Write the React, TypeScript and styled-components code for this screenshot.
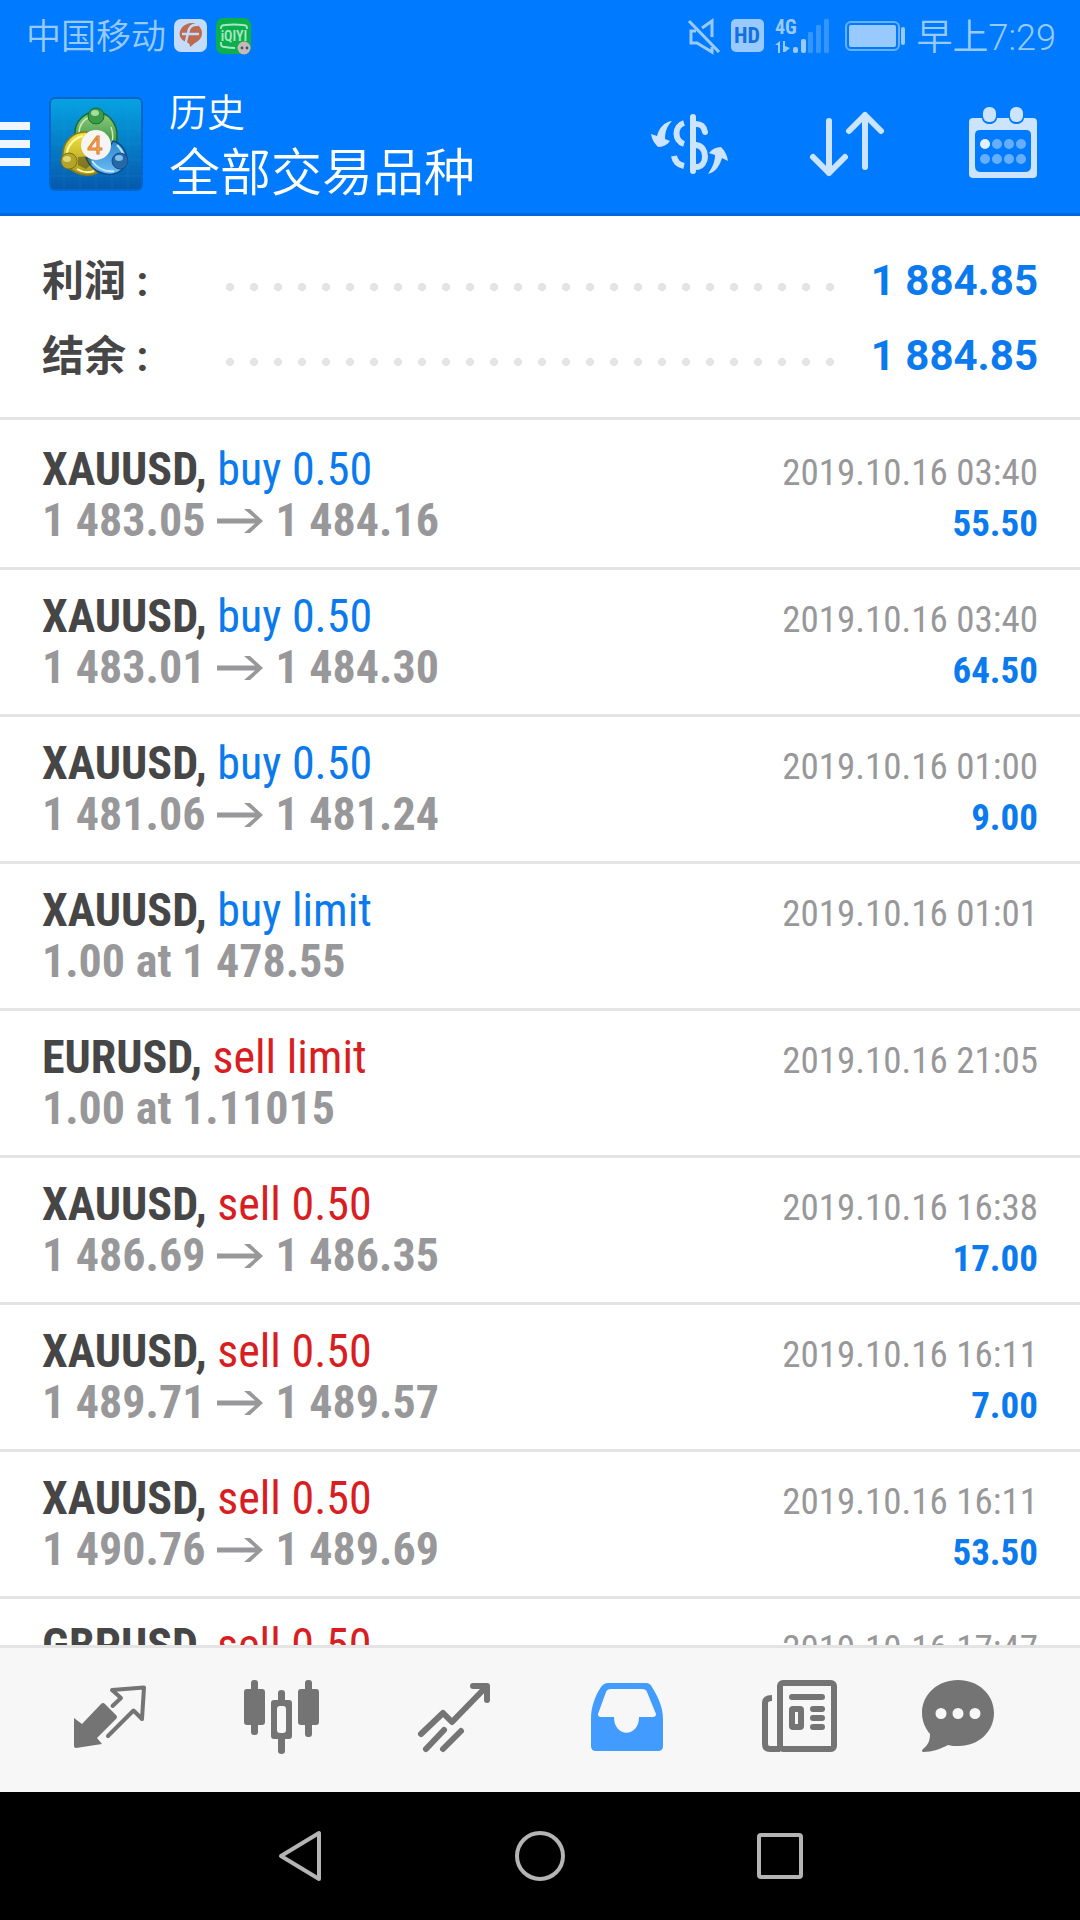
import React from 'react';
import styled, { createGlobalStyle } from 'styled-components';

const condensed = `'Roboto Condensed', Roboto, 'Noto Sans CJK SC', sans-serif`;
const regular = `Roboto, 'Noto Sans CJK SC', sans-serif`;

const GlobalStyle = createGlobalStyle`
  *, *::before, *::after { box-sizing: border-box; }
  html, body, #root { height: 100%; }
  body { margin: 0; background: #fff; font-family: ${regular}; }
  h1, p, ul, dl, dd, dt { margin: 0; padding: 0; font-weight: inherit; }
  svg { display: block; flex: none; overflow: visible; }
`;

const Screen = styled.div`
  display: flex;
  flex-direction: column;
  height: 100%;
  overflow: hidden;
`;

const Top = styled.header`
  flex: none;
  color: #fff;
  background: #007aff;
  border-bottom: 3px solid #006bdf;
`;

const StatusBar = styled.div`
  display: flex;
  align-items: center;
  height: 72px;
  padding: 0 24px 0 26px;
  color: #99caff;
`;

const StatusText = styled.span<{ $size: number }>`
  padding-top: 4px;
  font-size: ${(p) => p.$size}px;
  line-height: 48px;
  font-weight: 350;
`;

const StatusGroup = styled.div<{ $gap: number }>`
  display: flex;
  align-items: center;
  gap: ${(p) => p.$gap}px;
`;

const Spacer = styled.div`
  flex: 1;
`;

const Toolbar = styled.div`
  display: flex;
  align-items: center;
  height: 141px;
  padding: 2px 42px 0 0;
`;

const IconButton = styled.button`
  display: flex;
  padding: 0;
  border: 0;
  color: #cce4ff;
  background: none;
  cursor: pointer;
`;

const MenuButton = styled(IconButton)`
  align-items: center;
  gap: 19px;
`;

const Titles = styled.div`
  flex: 1;
  padding: 6px 0 0 26px;
  font-weight: 350;
`;

const Caption = styled.p`
  font-size: 38px;
  line-height: 54px;
`;

const Title = styled.h1`
  font-size: 51px;
  line-height: 68px;
`;

const Actions = styled.div`
  display: flex;
  align-items: center;
  gap: 84px;
`;

const Content = styled.main`
  flex: 1;
  min-height: 0;
  overflow: hidden;
`;

const Summary = styled.dl`
  padding: 24px 42px 27px;
  border-bottom: 3px solid #e4e4e4;
`;

const SummaryRow = styled.div`
  display: flex;
  align-items: center;
  height: 75px;
  padding-top: 6px;
  font-size: 42px;
  line-height: 60px;
`;

const SummaryLabel = styled.dt`
  width: 176px;
  padding-top: 3px;
  color: #464646;
  && { font-weight: 700; }
`;

const Leader = styled.span`
  flex: 1;
  height: 8px;
  margin-top: 12px;
  background: radial-gradient(circle at 12px 4px, #e4e4e4 4px, transparent 4px) 0 0 / 24px 8px repeat-x;
`;

const SummaryValue = styled.dd`
  width: 195px;
  color: #0a7aee;
  text-align: right;
  && { font-weight: 700; }
`;

const Deals = styled.ul`
  padding-top: 3px;
  list-style: none;
  font-family: ${condensed};
`;

const Deal = styled.li`
  display: grid;
  grid-template-columns: 1fr auto;
  align-content: start;
  height: 147px;
  padding: 21px 42px 0;
  border-bottom: 3px solid #e4e4e4;
  font-size: 46px;
  line-height: 51px;
  white-space: nowrap;
`;

const Symbol = styled.strong`
  color: #464646;
  font-weight: 700;
`;

const Side = styled.span<{ $sell: boolean }>`
  color: ${(p) => (p.$sell ? '#d81e22' : '#0a7aee')};
`;

const Prices = styled.div`
  display: flex;
  align-items: center;
  gap: 12px;
  color: #98989a;
  font-weight: 700;
`;

const Time = styled.time`
  height: 51px;
  color: #98989a;
  font-size: 37px;
  line-height: 57px;
  text-align: right;
`;

const Profit = styled.div`
  height: 51px;
  color: #0a7aee;
  font-size: 37px;
  line-height: 57px;
  font-weight: 700;
  text-align: right;
`;

const Tabs = styled.nav`
  flex: none;
  display: grid;
  grid-template-columns: repeat(5, 172fr) 142fr;
  align-items: center;
  justify-items: center;
  height: 147px;
  padding: 0 52px 6px 24px;
  border-top: 3px solid #e4e4e4;
  background: #f7f7f7;
`;

const TabButton = styled(IconButton)<{ $active?: boolean }>`
  color: ${(p) => (p.$active ? '#429bff' : '#747474')};
`;

const SystemBar = styled.nav`
  flex: none;
  display: grid;
  grid-template-columns: repeat(3, 1fr);
  align-items: center;
  justify-items: center;
  height: 128px;
  padding: 0 calc(100% / 6);
  background: #000;
`;

const SystemButton = styled(IconButton)`
  color: #b4b4b4;
`;

const LeafBadge = () => (
  <svg width="33" height="34" viewBox="0 0 33 34">
    <rect width="33" height="33" rx="7" fill="#c3dcfa" />
    <path d="M16 28c0-3-1-4-4-5-6-2-8-8-5-13 3-5 8-6 12-6 5 1 9 5 9 10 0 6-4 8-7 10-2 1-3 3-5 4z" fill="#bd6a50" />
    <path d="M24 6c-6-1-9 2-10 8l-3 13M8 15h17" fill="none" stroke="#c3dcfa" strokeWidth="2.4" />
  </svg>
);

const VideoBadge = () => (
  <svg width="37" height="38" viewBox="0 0 37 38">
    <rect x="1" y="1" width="35" height="36" rx="7" fill="#0bb04c" />
    <path d="M6 12v-1q0-3 4-3 9-1 18 0 4 0 4 3v1M6 25v2q0 3 4 3 5 1 10 1" fill="none" stroke="#a9e6c4" strokeWidth="1.8" />
    <text x="19" y="24" textAnchor="middle" fill="#a9e6c4" fontFamily="Roboto Condensed, Roboto, sans-serif" fontWeight="600" fontSize="14">iQIYI</text>
    <circle cx="29" cy="31" r="6.5" fill="#cdb7b4" />
    <circle cx="27" cy="31" r="1.4" fill="#245b8c" />
    <circle cx="32" cy="31" r="1.4" fill="#245b8c" />
  </svg>
);

const MuteIcon = () => (
  <svg width="34" height="36" viewBox="0 0 34 36" fill="none" stroke="currentColor" strokeWidth="3">
    <path d="M2 3l30 31" strokeWidth="3.2" />
    <path d="M15 10l10-7v16M9 13H4v12h6l15 9v-5" />
  </svg>
);

const HdIcon = () => (
  <svg width="34" height="36" viewBox="0 0 34 36">
    <rect y="1" width="33" height="33" rx="5" fill="#99caff" />
    <text x="16" y="25" textAnchor="middle" fill="#1170e4" fontFamily="Roboto Condensed, Roboto, sans-serif" fontWeight="700" fontSize="22">HD</text>
  </svg>
);

const SignalIcon = () => (
  <svg width="60" height="38" viewBox="0 0 60 38" fill="currentColor">
    <text x="0" y="17" fontFamily="Roboto Condensed, Roboto, sans-serif" fontWeight="700" fontSize="20">4G</text>
    <path d="M0 28l5-4v12H3v-8zM8 24h2l0 5 5 2-5 4-2 0z" />
    <rect x="18" y="30" width="5" height="6" rx="2" />
    <rect x="26" y="22" width="5" height="14" rx="2" />
    <g fill="#3395ff">
      <rect x="33" y="15" width="5" height="21" rx="1" />
      <rect x="41" y="8" width="5" height="28" rx="1" />
      <rect x="49" y="2" width="5" height="34" rx="1" />
    </g>
  </svg>
);

const BatteryIcon = () => (
  <svg width="62" height="30" viewBox="0 0 62 30">
    <rect x="1" y="1" width="53" height="28" rx="5" fill="none" stroke="#66b0ff" strokeWidth="2" />
    <rect x="4" y="4" width="47" height="22" rx="2" fill="#99caff" />
    <rect x="56" y="6" width="4" height="18" rx="2" fill="#99caff" />
  </svg>
);

const MenuIcon = () => (
  <svg width="30" height="44" viewBox="0 0 30 44" fill="#eff6ff">
    <path d="M0 0h30v8H0zM0 18h30v8H0zM0 36h30v8H0z" />
  </svg>
);

const LogoIcon = () => (
  <svg width="94" height="94" viewBox="0 0 94 94">
    <defs>
      <linearGradient id="tile" x1="0" y1="0" x2="0" y2="1">
        <stop offset="0" stopColor="#06a3e2" />
        <stop offset="1" stopColor="#0659ac" />
      </linearGradient>
      <linearGradient id="green" x1="0" y1="0" x2="0" y2="1">
        <stop offset="0" stopColor="#8fd082" />
        <stop offset="1" stopColor="#227a2b" />
      </linearGradient>
      <linearGradient id="gold" x1="0" y1="0" x2="0" y2="1">
        <stop offset="0" stopColor="#f5e23c" />
        <stop offset="1" stopColor="#a8991f" />
      </linearGradient>
      <linearGradient id="azure" x1="0" y1="0" x2="0" y2="1">
        <stop offset="0" stopColor="#2d86cf" />
        <stop offset="1" stopColor="#6cc0f6" />
      </linearGradient>
    </defs>
    <rect x="1" y="1" width="92" height="92" rx="5" fill="url(#tile)" stroke="#0565c9" strokeWidth="2" />
    <path d="M15 2v90M31 2v90M47 2v90M63 2v90M79 2v90M2 15h90M2 31h90M2 47h90M2 63h90M2 79h90" stroke="#2bb0ee" strokeOpacity=".15" />
    <path d="M26 38C25 24 36 15 47 15s22 10 21 26c0 8-3 14-7 18L50 40z" fill="url(#green)" stroke="#1a6b2c" strokeWidth="1.5" />
    <path d="M30 36c0-8 5-14 11-16M62 30c3 8 2 14 0 20" fill="none" stroke="#c9ecb9" strokeWidth="1.5" />
    <path d="M38 35c-14-1-25 10-24 25 3 14 20 22 34 16l-6-14z" fill="url(#gold)" stroke="#8a7a18" strokeWidth="1.5" />
    <path d="M34 39c-9 2-16 10-16 18M28 72c5 3 12 4 17 2" fill="none" stroke="#fffbb0" strokeWidth="2" />
    <path d="M64 44c8 2 14 10 14 20-3 11-14 16-25 12-7-2-13-8-16-15l18-2z" fill="url(#azure)" stroke="#0d4d8c" strokeWidth="1.5" />
    <path d="M43 64c5 7 13 11 22 10M68 48c4 4 7 9 7 14" fill="none" stroke="#c2e6ff" strokeWidth="2" />
    <path d="M29 60l12-1 2 8-6 5-8-4z" fill="#3a3a1c" fillOpacity=".45" />
    <circle cx="47" cy="19" r="8" fill="#3c9a48" stroke="#1a6b2c" />
    <ellipse cx="46" cy="16" rx="4" ry="3" fill="#a5dca0" />
    <circle cx="20" cy="64" r="8" fill="#b5a428" stroke="#7e7217" />
    <ellipse cx="18" cy="62" rx="4" ry="3" fill="#dfd775" />
    <circle cx="71" cy="64" r="8" fill="#2568a8" stroke="#12508c" />
    <ellipse cx="70" cy="61" rx="4" ry="3" fill="#83bdea" />
    <circle cx="47" cy="48" r="15" fill="#f7f5f4" />
    <text x="46" y="57" textAnchor="middle" fill="#f6b25c" stroke="#e07b2b" strokeWidth="1" fontFamily="Open Sans, sans-serif" fontSize="26">4</text>
  </svg>
);

const DollarIcon = () => (
  <svg width="76" height="64" viewBox="0 0 76 64" fill="none" stroke="currentColor" strokeWidth="6" strokeLinecap="round">
    <path d="M43 5v54" />
    <path d="M46 12c6 0 8 3 9 8M46 33c12 1 12 22 0 22" />
    <path d="M34 11c-10 3-10 18 0 21" strokeLinecap="butt" />
    <path d="M24 44c1 6 5 9 10 10" strokeLinecap="butt" />
    <g fill="currentColor" stroke="none">
      <path d="M22 9C14 10 9 16 7 24l-6-2c1 6 4 10 7 13 5 0 9-2 12-6l-5-2c0-7 2-13 7-18z" />
      <path d="M58 62c8-2 12-9 14-16l6 3c-1-6-3-10-7-14-5 0-9 2-12 6l6 2c0 7-3 13-7 19z" />
    </g>
  </svg>
);

const SortIcon = () => (
  <svg width="74" height="66" viewBox="0 0 74 66" fill="none" stroke="currentColor" strokeWidth="6" strokeLinecap="round" strokeLinejoin="round">
    <path d="M19 10v52M3 46l16 16 16-16M55 56V4M39 20L55 4l16 16" />
  </svg>
);

const CalendarIcon = () => (
  <svg width="70" height="72" viewBox="0 2 70 72" fill="currentColor">
    <path fillRule="evenodd" d="M5 12h9c1 8 14 8 15 0h12c1 8 14 8 15 0h9q4 0 4 4v52q0 4-4 4H5q-4 0-4-4V16q0-4 4-4zM12 24q-5 0-5 5v31q0 6 6 6h44q6 0 6-6V29q0-5-5-5z" />
    <rect x="15" y="1" width="13" height="15" rx="6" />
    <rect x="42" y="1" width="13" height="15" rx="6" />
    <circle cx="17" cy="38" r="5" fill="#e3f1ff" />
    <g opacity=".5">
      <circle cx="29" cy="38" r="5" /><circle cx="41" cy="38" r="5" /><circle cx="53" cy="38" r="5" />
      <circle cx="17" cy="53" r="5" /><circle cx="29" cy="53" r="5" /><circle cx="41" cy="53" r="5" /><circle cx="53" cy="53" r="5" />
    </g>
  </svg>
);

const ArrowIcon = () => (
  <svg width="46" height="26" viewBox="0 0 46 26" role="img" aria-label="→" fill="currentColor">
    <path d="M0 10.500h38L27 1h6l13 12-13 12h-6l11-9.500H0z" />
  </svg>
);

const QuotesIcon = () => (
  <svg width="72" height="64" viewBox="0 0 72 64">
    <path d="M0 33l8 6 19-20q2-2 4 0l11 11q2 2 0 4L23 53l5 6-26 4q-2 0-2-2z" fill="currentColor" />
    <path d="M38.500 21l8.500-8-9-8 32-2.500-2 31.500-8.500-8.500L34 51" fill="none" stroke="currentColor" strokeWidth="4" strokeLinejoin="round" strokeLinecap="round" />
  </svg>
);

const ChartIcon = () => (
  <svg width="78" height="74" viewBox="0 0 78 74" fill="currentColor">
    <rect x="7" y="0" width="7" height="55" rx="3" />
    <rect x="0" y="9" width="21" height="36" rx="3" />
    <rect x="61" y="0" width="7" height="57" rx="3" />
    <rect x="54" y="9" width="21" height="36" rx="3" />
    <path fillRule="evenodd" d="M34 20v-7q0-3 3.500-3t3.500 3v7h4q3 0 3 3v33q0 3-3 3h-4v12q0 3-3.500 3T34 71V59h-4q-3 0-3-3V23q0-3 3-3zM36 26q-3 0-3 3v21q0 3 3 3h3q3 0 3-3V29q0-3-3-3z" />
  </svg>
);

const TradeIcon = () => (
  <svg width="74" height="70" viewBox="0 0 74 70" fill="none" stroke="currentColor" strokeWidth="6" strokeLinecap="round" strokeLinejoin="round">
    <path d="M3 52l22-21 9 9L68 5M55 4h14v14" />
    <path d="M8 67l18-19M25 67l18-18" />
  </svg>
);

const HistoryIcon = () => (
  <svg width="72" height="68" viewBox="0 0 72 68" fill="currentColor">
    <path fillRule="evenodd" d="M17 0h38q4 0 6 4c6 10 11 20 11 32v27q0 5-5 5H5q-5 0-5-5V36C0 24 4 13 10 4q3-4 7-4zM20 6q-4 0-5 3L7 31q0 3 3 3h13c0 21 25 21 25 0h14q3 0 3-3L56 9q-1-3-5-3z" />
  </svg>
);

const NewsIcon = () => (
  <svg width="75" height="74" viewBox="0 0 75 74" fill="none" stroke="currentColor" strokeWidth="6">
    <rect x="18" y="3" width="54" height="66" rx="3" />
    <path d="M18 69H8q-5 0-5-5V23q0-5 7-5" />
    <path d="M30 17h30M51 29h9M51 38h9M51 47h9" strokeLinecap="round" />
    <rect x="30" y="29" width="9" height="18" rx="1" />
  </svg>
);

const ChatIcon = () => (
  <svg width="72" height="74" viewBox="0 0 72 74" fill="currentColor">
    <path fillRule="evenodd" d="M37 0c20 0 36 14 36 33S57 66 38 66c-4 0-8 0-11-1-8 4-15 7-25 7q-2-1 0-3c5-4 7-8 7-15C4 48 1 41 1 33 1 14 17 0 37 0zM20 28a5.500 5.500 0 1 0 0 11 5.500 5.500 0 1 0 0-11zm17 0a5.500 5.500 0 1 0 0 11 5.500 5.500 0 1 0 0-11zm17 0a5.500 5.500 0 1 0 0 11 5.500 5.500 0 1 0 0-11z" />
  </svg>
);

const BackIcon = () => (
  <svg width="44" height="52" viewBox="0 0 44 52" fill="none" stroke="currentColor" strokeWidth="4" strokeLinejoin="round">
    <path d="M41 3v46L3 26z" />
  </svg>
);

const HomeIcon = () => (
  <svg width="52" height="52" viewBox="0 0 52 52" fill="none" stroke="currentColor" strokeWidth="4">
    <circle cx="26" cy="26" r="23" />
  </svg>
);

const RecentIcon = () => (
  <svg width="46" height="46" viewBox="0 0 46 46" fill="none" stroke="currentColor" strokeWidth="4">
    <rect x="2" y="2" width="42" height="42" rx="2" />
  </svg>
);

type DealData = {
  symbol: string;
  side: string;
  time: string;
  from?: string;
  to?: string;
  order?: string;
  profit?: string;
};

const deals: DealData[] = [
  { symbol: 'XAUUSD', side: 'buy 0.50', time: '2019.10.16 03:40', from: '1 483.05', to: '1 484.16', profit: '55.50' },
  { symbol: 'XAUUSD', side: 'buy 0.50', time: '2019.10.16 03:40', from: '1 483.01', to: '1 484.30', profit: '64.50' },
  { symbol: 'XAUUSD', side: 'buy 0.50', time: '2019.10.16 01:00', from: '1 481.06', to: '1 481.24', profit: '9.00' },
  { symbol: 'XAUUSD', side: 'buy limit', time: '2019.10.16 01:01', order: '1.00 at 1 478.55' },
  { symbol: 'EURUSD', side: 'sell limit', time: '2019.10.16 21:05', order: '1.00 at 1.11015' },
  { symbol: 'XAUUSD', side: 'sell 0.50', time: '2019.10.16 16:38', from: '1 486.69', to: '1 486.35', profit: '17.00' },
  { symbol: 'XAUUSD', side: 'sell 0.50', time: '2019.10.16 16:11', from: '1 489.71', to: '1 489.57', profit: '7.00' },
  { symbol: 'XAUUSD', side: 'sell 0.50', time: '2019.10.16 16:11', from: '1 490.76', to: '1 489.69', profit: '53.50' },
  { symbol: 'GBPUSD', side: 'sell 0.50', time: '2019.10.16 17:47' },
];

const totals = [
  { label: '利润', value: '1 884.85' },
  { label: '结余', value: '1 884.85' },
];

const tabs = [
  { label: '行情', Icon: QuotesIcon },
  { label: '图表', Icon: ChartIcon },
  { label: '交易', Icon: TradeIcon },
  { label: '历史', Icon: HistoryIcon, active: true },
  { label: '新闻', Icon: NewsIcon },
  { label: '聊天', Icon: ChatIcon },
];

export default function App() {
  return (
    <Screen>
      <GlobalStyle />
      <Top>
        <StatusBar>
          <StatusGroup $gap={8}>
            <StatusText $size={35}>中国移动</StatusText>
            <LeafBadge />
            <VideoBadge />
          </StatusGroup>
          <Spacer />
          <StatusGroup $gap={10}>
            <MuteIcon />
            <HdIcon />
            <SignalIcon />
            <BatteryIcon />
            <StatusText $size={36}>早上7:29</StatusText>
          </StatusGroup>
        </StatusBar>
        <Toolbar>
          <MenuButton aria-label="菜单">
            <MenuIcon />
            <LogoIcon />
          </MenuButton>
          <Titles>
            <Caption>历史</Caption>
            <Title>全部交易品种</Title>
          </Titles>
          <Actions>
            <IconButton aria-label="交易品种"><DollarIcon /></IconButton>
            <IconButton aria-label="排序"><SortIcon /></IconButton>
            <IconButton aria-label="日期"><CalendarIcon /></IconButton>
          </Actions>
        </Toolbar>
      </Top>
      <Content>
        <Summary>
          {totals.map((t) => (
            <SummaryRow key={t.label}>
              <SummaryLabel>{t.label} :</SummaryLabel>
              <Leader />
              <SummaryValue>{t.value}</SummaryValue>
            </SummaryRow>
          ))}
        </Summary>
        <Deals>
          {deals.map((d, i) => (
            <Deal key={i}>
              <div>
                <Symbol>{d.symbol},</Symbol> <Side $sell={d.side.startsWith('sell')}>{d.side}</Side>
              </div>
              <Time>{d.time}</Time>
              <Prices>
                {d.order && <span>{d.order}</span>}
                {d.from && (
                  <>
                    <span>{d.from}</span>
                    <ArrowIcon />
                    <span>{d.to}</span>
                  </>
                )}
              </Prices>
              {d.profit && <Profit>{d.profit}</Profit>}
            </Deal>
          ))}
        </Deals>
      </Content>
      <Tabs>
        {tabs.map(({ label, Icon, active }) => (
          <TabButton key={label} aria-label={label} $active={active}>
            <Icon />
          </TabButton>
        ))}
      </Tabs>
      <SystemBar>
        <SystemButton aria-label="返回"><BackIcon /></SystemButton>
        <SystemButton aria-label="主页"><HomeIcon /></SystemButton>
        <SystemButton aria-label="最近"><RecentIcon /></SystemButton>
      </SystemBar>
    </Screen>
  );
}
